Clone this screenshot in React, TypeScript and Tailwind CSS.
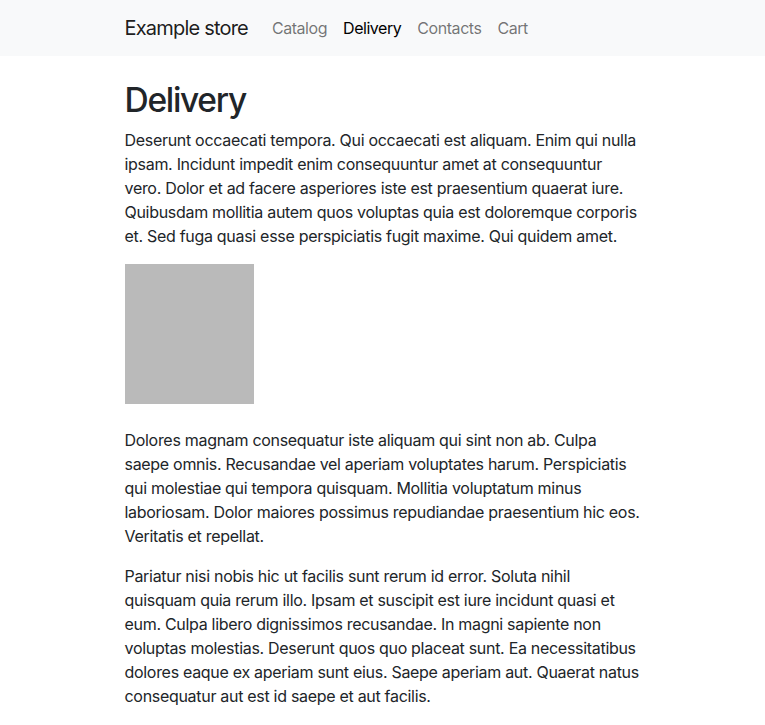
const paragraphs = [
  'Dolores magnam consequatur iste aliquam qui sint non ab. Culpa saepe omnis. Recusandae vel aperiam voluptates harum. Perspiciatis qui molestiae qui tempora quisquam. Mollitia voluptatum minus laboriosam. Dolor maiores possimus repudiandae praesentium hic eos. Veritatis et repellat.',
  'Pariatur nisi nobis hic ut facilis sunt rerum id error. Soluta nihil quisquam quia rerum illo. Ipsam et suscipit est iure incidunt quasi et eum. Culpa libero dignissimos recusandae. In magni sapiente non voluptas molestias. Deserunt quos quo placeat sunt. Ea necessitatibus dolores eaque ex aperiam sunt eius. Saepe aperiam aut. Quaerat natus consequatur aut est id saepe et aut facilis.',
]

const links = [
  { label: 'Catalog' },
  { label: 'Delivery', active: true },
  { label: 'Contacts' },
  { label: 'Cart' },
]

export default function App() {
  return (
    <div className="min-h-screen bg-white text-[#212529] font-['Inter','Liberation_Sans',sans-serif] text-base leading-6">
      {/* Navbar */}
      <nav className="bg-[#f8f9fa] py-2">
        <div className="max-w-[540px] mx-auto px-3 flex items-center">
          <a href="#" className="text-xl leading-[30px] py-[5px] mr-4 tracking-[-0.8px] text-black/90">
            Example store
          </a>
          <ul className="flex items-center tracking-[-0.45px]">
            {links.map((link) => (
              <li key={link.label}>
                <a
                  href="#"
                  className={`block px-2 py-2 ${link.active ? 'text-black' : 'text-black/55'}`}
                >
                  {link.label}
                </a>
              </li>
            ))}
          </ul>
        </div>
      </nav>

      {/* Content */}
      <main className="max-w-[540px] mx-auto px-3 pt-6 tracking-[-0.3px]">
        <h1 className="text-[33.5px] leading-[40px] font-medium tracking-[-1.3px] mb-2">Delivery</h1>
        <p className="mb-4">
          Deserunt occaecati tempora. Qui occaecati est aliquam. Enim qui nulla ipsam. Incidunt impedit enim consequuntur amet at consequuntur vero. Dolor et ad facere asperiores iste est praesentium quaerat iure. Quibusdam mollitia autem quos voluptas quia est doloremque corporis et. Sed fuga quasi esse perspiciatis fugit maxime. Qui quidem amet.
        </p>
        <div className="w-[129px] h-[140px] bg-[#bababa] mb-6" />
        {paragraphs.map((text, i) => (
          <p key={i} className="mb-4">
            {text}
          </p>
        ))}
      </main>
    </div>
  )
}
